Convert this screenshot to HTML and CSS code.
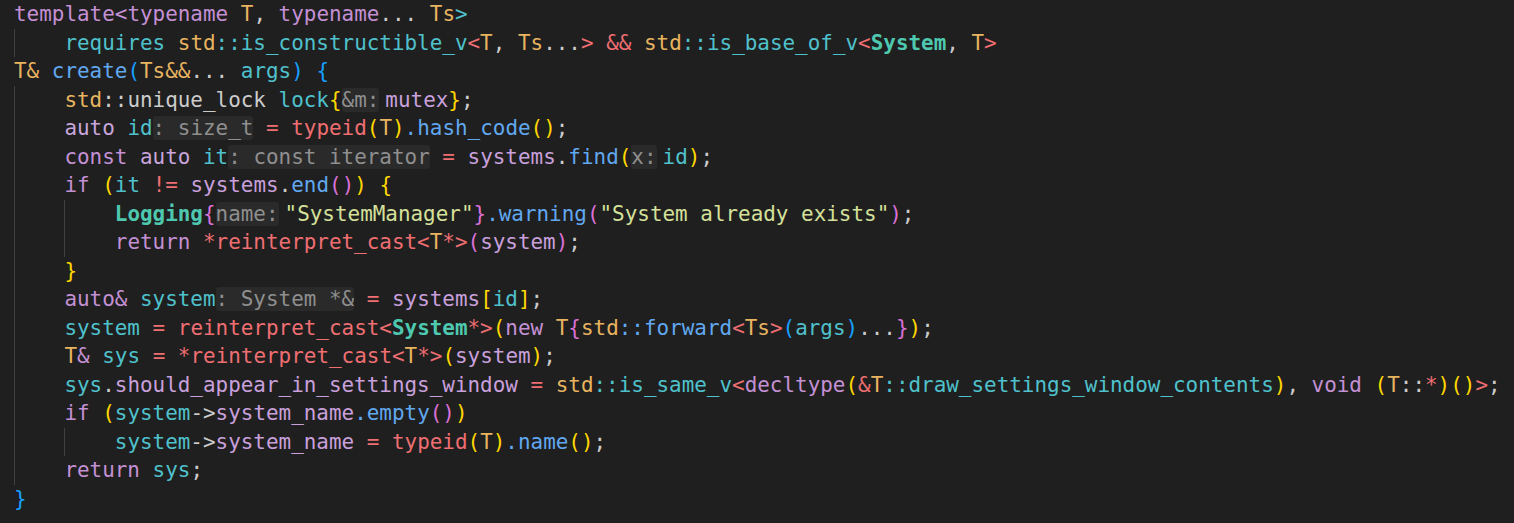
FILE: index.html
```html
<!DOCTYPE html>
<html>
<head>
<meta charset="utf-8">
<link rel="stylesheet" href="styles.css">
</head>
<body>
<div class="code">
<div class="ln"><span class="k">template</span><span class="k">&lt;</span><span class="k">typename</span> <span class="t">T</span>, <span class="k">typename</span><span class="p">...</span> <span class="t">Ts</span><span class="c">&gt;</span></div>
<div class="ln"><span class="ind g">    </span><span class="c">requires</span> <span class="t">std</span><span class="c">::is_constructible_v</span><span class="r">&lt;</span><span class="t">T</span>, <span class="t">Ts</span><span class="p">...</span><span class="r">&gt;</span> <span class="r">&amp;&amp;</span> <span class="t">std</span><span class="c">::is_base_of_v</span><span class="r">&lt;</span><span class="b">System</span>, <span class="t">T</span><span class="r">&gt;</span></div>
<div class="ln"><span class="t">T&amp;</span> <span class="f">create</span><span class="b3">(</span><span class="t">Ts&amp;&amp;</span><span class="p">...</span> <span class="c">args</span><span class="b3">)</span> <span class="b3">{</span></div>
<div class="ln"><span class="ind g">    </span><span class="t">std</span><span class="p">::unique_lock</span> <span class="c">lock</span><span class="b1">{</span><span class="h hp">&amp;m:</span><span class="m">mutex</span><span class="b1">}</span>;</div>
<div class="ln"><span class="ind g">    </span><span class="k2">auto</span> <span class="c">id</span><span class="h">: size_t</span> <span class="r">=</span> <span class="r">typeid</span><span class="b1">(</span><span class="t">T</span><span class="b1">)</span><span class="f">.hash_code</span><span class="b1">()</span>;</div>
<div class="ln"><span class="ind g">    </span><span class="k">const</span> <span class="k2">auto</span> <span class="c">it</span><span class="h">: const iterator</span> <span class="r">=</span> <span class="m">systems</span>.<span class="f">find</span><span class="b1">(</span><span class="h hp">x:</span><span class="c">id</span><span class="b1">)</span>;</div>
<div class="ln"><span class="ind g">    </span><span class="k">if</span> <span class="b1">(</span><span class="c">it</span> <span class="r">!=</span> <span class="m">systems</span>.<span class="f">end</span><span class="b2">()</span><span class="b1">)</span> <span class="b1">{</span></div>
<div class="ln"><span class="ind g">    </span><span class="ind g">    </span><span class="b">Logging</span><span class="b2">{</span><span class="h hp">name:</span><span class="s">"SystemManager"</span><span class="b2">}</span><span class="f">.warning</span><span class="b2">(</span><span class="s">"System already exists"</span><span class="b2">)</span>;</div>
<div class="ln"><span class="ind g">    </span><span class="ind g">    </span><span class="k">return</span> <span class="r">*reinterpret_cast&lt;</span><span class="t">T</span><span class="r">*&gt;</span><span class="b2">(</span><span class="m">system</span><span class="b2">)</span>;</div>
<div class="ln"><span class="ind g">    </span><span class="b1">}</span></div>
<div class="ln"><span class="ind g">    </span><span class="k">auto&amp;</span> <span class="c">system</span><span class="h">: System *&amp;</span> <span class="r">=</span> <span class="m">systems</span><span class="b1">[</span><span class="c">id</span><span class="b1">]</span>;</div>
<div class="ln"><span class="ind g">    </span><span class="c">system</span> <span class="r">=</span> <span class="r">reinterpret_cast&lt;</span><span class="b">System</span><span class="r">*&gt;</span><span class="b1">(</span><span class="k">new</span> <span class="t">T</span><span class="b2">{</span><span class="t">std</span><span class="f">::forward</span><span class="r">&lt;</span><span class="t">Ts</span><span class="r">&gt;</span><span class="b3">(</span><span class="c">args</span><span class="b3">)</span><span class="p">...</span><span class="b2">}</span><span class="b1">)</span>;</div>
<div class="ln"><span class="ind g">    </span><span class="t">T</span><span class="k">&amp;</span> <span class="c">sys</span> <span class="r">=</span> <span class="r">*reinterpret_cast&lt;</span><span class="t">T</span><span class="r">*&gt;</span><span class="b1">(</span><span class="m">system</span><span class="b1">)</span>;</div>
<div class="ln"><span class="ind g">    </span><span class="c">sys</span>.<span class="m">should_appear_in_settings_window</span> <span class="r">=</span> <span class="t">std</span><span class="c">::is_same_v</span><span class="r">&lt;</span><span class="k">decltype</span><span class="b1">(</span><span class="r">&amp;</span><span class="t">T</span><span class="c">::draw_settings_window_contents</span><span class="b1">)</span>, <span class="k">void</span> <span class="b1">(</span><span class="t">T</span>::<span class="r">*</span><span class="b1">)()</span><span class="r">&gt;</span>;</div>
<div class="ln"><span class="ind g">    </span><span class="k">if</span> <span class="b1">(</span><span class="c">system</span>-&gt;<span class="m">system_name</span><span class="f">.empty</span><span class="b2">()</span><span class="b1">)</span></div>
<div class="ln"><span class="ind g">    </span><span class="ind g">    </span><span class="c">system</span>-&gt;<span class="m">system_name</span> <span class="r">=</span> <span class="r">typeid</span><span class="b1">(</span><span class="t">T</span><span class="b1">)</span><span class="f">.name</span><span class="b1">()</span>;</div>
<div class="ln"><span class="ind g">    </span><span class="k">return</span> <span class="c">sys</span>;</div>
<div class="ln"><span class="b3">}</span></div>
</div>
</body>
</html>
```

FILE: styles.css
```css
html, body {
  margin: 0;
  padding: 0;
  background: #1f1f1f;
}
.code {
  padding-left: 14px;
  font-family: "DejaVu Sans Mono", "Liberation Mono", monospace;
  font-size: 20.93px;
  line-height: 28.5px;
  color: #cccccc;
}
.ln {
  height: 28.5px;
  white-space: pre;
}
.ind {
  display: inline-block;
  height: 28.5px;
  vertical-align: top;
}
.g {
  box-shadow: inset 1px 0 0 #404040;
}
.k { color: #c490d4; }
.k2 { color: #c8a6dc; }
.m { color: #c9a0dc; }
.t { color: #e8b460; }
.c { color: #4fc1cc; }
.r { color: #ef6e72; }
.f { color: #61a8f0; }
.s { color: #d5e19a; }
.b { color: #4ec9b0; font-weight: bold; }
.p { color: #cccccc; }
.b1 { color: #ffd700; }
.b2 { color: #da70d6; }
.b3 { color: #179fff; }
.h {
  color: #8f8f8f;
  background: #2a2a2a;
  border-radius: 3px;
}
.hp {
  margin-right: 6px;
}
```
